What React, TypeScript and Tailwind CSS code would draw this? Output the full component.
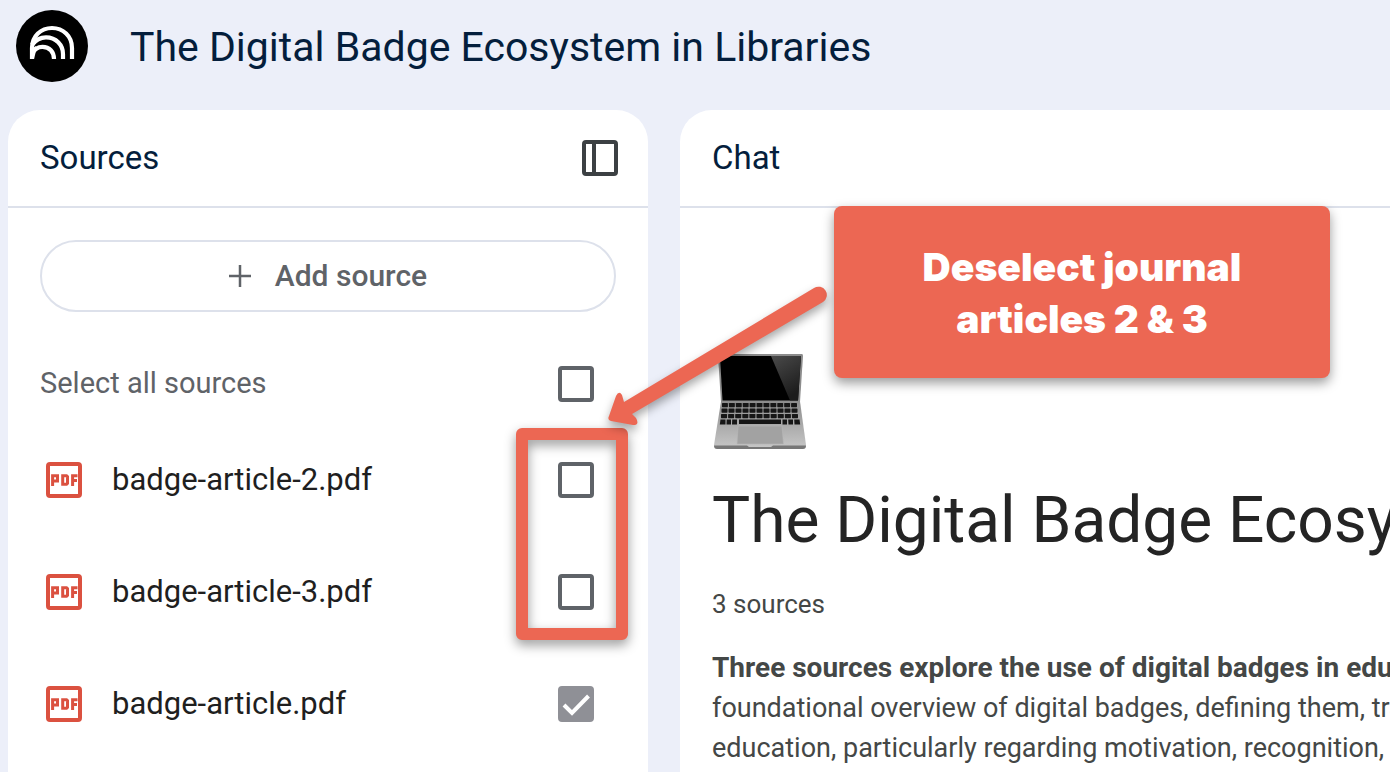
import React from "react";

const sources = [
  { name: "badge-article-2.pdf", checked: false },
  { name: "badge-article-3.pdf", checked: false },
  { name: "badge-article.pdf", checked: true },
];

function Logo() {
  return (
    <svg viewBox="0 0 72 72" className="size-[72px] shrink-0" aria-hidden="true">
      <circle cx="36" cy="36" r="36" fill="#000" />
      <g fill="none" stroke="#fff" strokeWidth="4.2">
        <path d="M16 49V38C16 26 25 18 36 18S56 26 56 38V49" />
        <path d="M16 35C20 29.500 25 27.400 30 27.400C40 27.400 47 35 47 44V49" />
        <path d="M16 43.500C18.500 38.800 22 36.800 26.500 36.800C33.500 36.800 38 42 38 49" />
      </g>
      <path d="M14 40L20 36V41L18 49H14Z" fill="#fff" />
    </svg>
  );
}

function PanelIcon() {
  return (
    <svg viewBox="0 0 36 36" className="size-9" fill="none" stroke="#3c4043" strokeWidth="4" aria-hidden="true">
      <rect x="2" y="2" width="32" height="32" rx="2" />
      <path d="M12 2V34" />
    </svg>
  );
}

function PdfIcon() {
  return (
    <svg viewBox="0 0 36 36" className="mx-[6px] size-9 shrink-0" fill="none" stroke="#db5140" aria-hidden="true">
      <rect x="2" y="2" width="32" height="32" rx="2" strokeWidth="4" />
      <g strokeWidth="3">
        <path d="M6.600 24V13.700H11.500V19H6.600" />
        <path d="M16.700 13.700H20.500L21.500 14.700V21.300L20.500 22.300H16.700Z" />
        <path d="M26.600 24V13.700H31.500M26.600 18.600H31" />
      </g>
    </svg>
  );
}

function Checkbox({ label, checked }: { label: string; checked: boolean }) {
  return (
    <span className="relative flex size-9 shrink-0">
      <input
        type="checkbox"
        aria-label={label}
        defaultChecked={checked}
        className="peer size-9 appearance-none rounded-[4px] border-4 border-[#5f6368] checked:border-[#8f9096] checked:bg-[#8f9096]"
      />
      <svg
        viewBox="0 0 36 36"
        className="pointer-events-none absolute inset-0 hidden size-9 peer-checked:block"
        fill="none"
        stroke="#fff"
        strokeWidth="4"
        aria-hidden="true"
      >
        <path d="M6 19L14 27L30.500 10" />
      </svg>
    </span>
  );
}

function Laptop() {
  const keyRows = [
    { y: 49, left: 8, right: 84, n: 11 },
    { y: 54.5, left: 7.5, right: 84.5, n: 11 },
    { y: 60, left: 7, right: 85, n: 11 },
  ];
  return (
    <svg viewBox="0 0 92 96" className="ml-0.5 h-24 w-[92px]" role="img" aria-label="Laptop">
      <defs>
        <linearGradient id="deck" x1="0" y1="0" x2="0" y2="1">
          <stop offset="0" stopColor="#8d8d8d" />
          <stop offset="1" stopColor="#c6c6c6" />
        </linearGradient>
        <linearGradient id="glare" x1="0" y1="0" x2="0.4" y2="1">
          <stop offset="0" stopColor="#4a4a4a" />
          <stop offset="1" stopColor="#1c1c1c" />
        </linearGradient>
      </defs>
      <path d="M5 0H88Q89 0 89 2L86 48H7L4 2Q4 0 5 0Z" fill="#8c8c8c" />
      <path d="M6 2H87L84 46.500H8.500Z" fill="#000" />
      <path d="M57 2H87L84 46.500H76Z" fill="url(#glare)" />
      <path d="M7 47.500H86L92 91Q92 94 90 94H2Q0 94 0 91Z" fill="url(#deck)" />
      <path d="M0 91.500H33L35 93H57L59 91.500H92Q92 95 89 95H3Q0 95 0 91.500Z" fill="#777" />
      {keyRows.map((row) =>
        Array.from({ length: row.n }, (_, i) => {
          const step = (row.right - row.left) / row.n;
          return <rect key={`${row.y}-${i}`} x={row.left + i * step} y={row.y} width={step - 1} height="4.2" rx="0.6" fill="#161616" />;
        }),
      )}
      <path d="M6.500 65.500H11.500V70.500H5.800ZM12.700 65.500H17V70.500H12.500ZM18.200 65.500H23V70.500H18ZM25 65.500H67V70H25ZM68.500 65.500H73V70.500H68.500ZM74.200 65.500H79V70.500H74.500ZM80.200 65.500H85.500L86.200 70.500H80.500Z" fill="#161616" />
      <path d="M24 72H68L69.500 90H23Z" fill="#a2a2a2" stroke="#b8b8b8" strokeWidth="0.6" />
    </svg>
  );
}

function Callout() {
  return (
    <>
      <svg
        viewBox="0 0 240 150"
        className="pointer-events-none absolute top-[282px] left-[600px] h-[150px] w-[240px] overflow-visible drop-shadow-[0_5px_5px_rgba(0,0,0,0.35)]"
        aria-hidden="true"
      >
        <path
          d="M24 120L214 6A8 8 0 0 1 223 20L32 132L36 136Q40 143 33 143L11 139Q7 138 9 134L16 114Q19 108 22 113Z"
          fill="#ec6753"
        />
      </svg>
      <p className="absolute top-[206px] left-[834px] flex h-[172px] w-[496px] items-center justify-center rounded-[8px] bg-[#ec6753] pt-0.5 text-center font-[Inter,sans-serif] text-[39px] leading-[52px] font-black text-white shadow-[0_5px_12px_rgba(0,0,0,0.4)]">
        Deselect journal
        <br />
        articles 2 &amp; 3
      </p>
    </>
  );
}

function SourcesPanel() {
  return (
    <section className="w-[640px] shrink-0 rounded-t-[32px] bg-white">
      <header className="flex h-[98px] items-center justify-between border-b-2 border-[#dde1eb] pr-[30px] pl-8">
        <h2 className="text-[33px] leading-10 text-[#041e3c]">Sources</h2>
        <button type="button" aria-label="Collapse sources panel">
          <PanelIcon />
        </button>
      </header>
      <div className="px-8 pt-8">
        <button
          type="button"
          className="flex h-[72px] w-full items-center justify-center gap-6 rounded-[36px] border-2 border-[#dde1eb] text-[30px] font-medium text-[#5f6368]"
        >
          <svg viewBox="0 0 22 22" className="size-[22px]" stroke="#5f6368" strokeWidth="2.500" aria-hidden="true">
            <path d="M11 0V22M0 11H22" />
          </svg>
          <span className="pb-0.5">Add source</span>
        </button>
      </div>
      <div className="mt-10 flex h-16 items-center justify-between pr-[54px] pl-8 text-[29px] text-[#5f6368]">
        <span>Select all sources</span>
        <Checkbox label="Select all sources" checked={false} />
      </div>
      <div className="relative mt-2">
        <ul>
          {sources.map((s) => (
            <li key={s.name} className="flex h-28 items-center pr-[54px] pl-8 text-[31px] text-[#1f1f1f]">
              <PdfIcon />
              <span className="ml-6 grow">{s.name}</span>
              <Checkbox label={s.name} checked={s.checked} />
            </li>
          ))}
        </ul>
        <div className="pointer-events-none absolute top-1 right-5 h-[212px] w-28 rounded-[6px] border-12 border-[#ec6753] drop-shadow-[0_5px_6px_rgba(0,0,0,0.4)]" />
      </div>
    </section>
  );
}

function ChatPanel() {
  return (
    <section className="min-w-0 grow overflow-hidden rounded-tl-[32px] bg-white whitespace-nowrap">
      <header className="flex h-[98px] items-center border-b-2 border-[#dde1eb] px-8">
        <h2 className="text-[33px] leading-10 text-[#041e3c]">Chat</h2>
      </header>
      <div className="px-8 pt-[146px] text-[27px] leading-10 text-[#444746]">
        <Laptop />
        <h1 className="mt-6 text-[64px] leading-[94px] text-[#242424]">The Digital Badge Ecosystem in Libraries</h1>
        <p className="mt-4 text-[26px]">3 sources</p>
        <p className="mt-6">
          <strong className="text-[28px] font-bold">Three sources explore the use of digital badges in education.</strong>
          <br />
          foundational overview of digital badges, defining them, tracing
          <br />
          education, particularly regarding motivation, recognition,
        </p>
      </div>
    </section>
  );
}

export default function App() {
  return (
    <div className="relative flex h-screen flex-col overflow-hidden bg-[#eceff9] font-[Roboto,sans-serif]">
      <header className="flex h-[110px] shrink-0 items-center gap-[42px] px-4 pb-[18px]">
        <Logo />
        <p className="pt-0.5 text-[41px] leading-[48px] text-[#041e3c]">The Digital Badge Ecosystem in Libraries</p>
      </header>
      <main className="flex min-h-0 grow gap-8 pl-2">
        <SourcesPanel />
        <ChatPanel />
      </main>
      <Callout />
    </div>
  );
}
